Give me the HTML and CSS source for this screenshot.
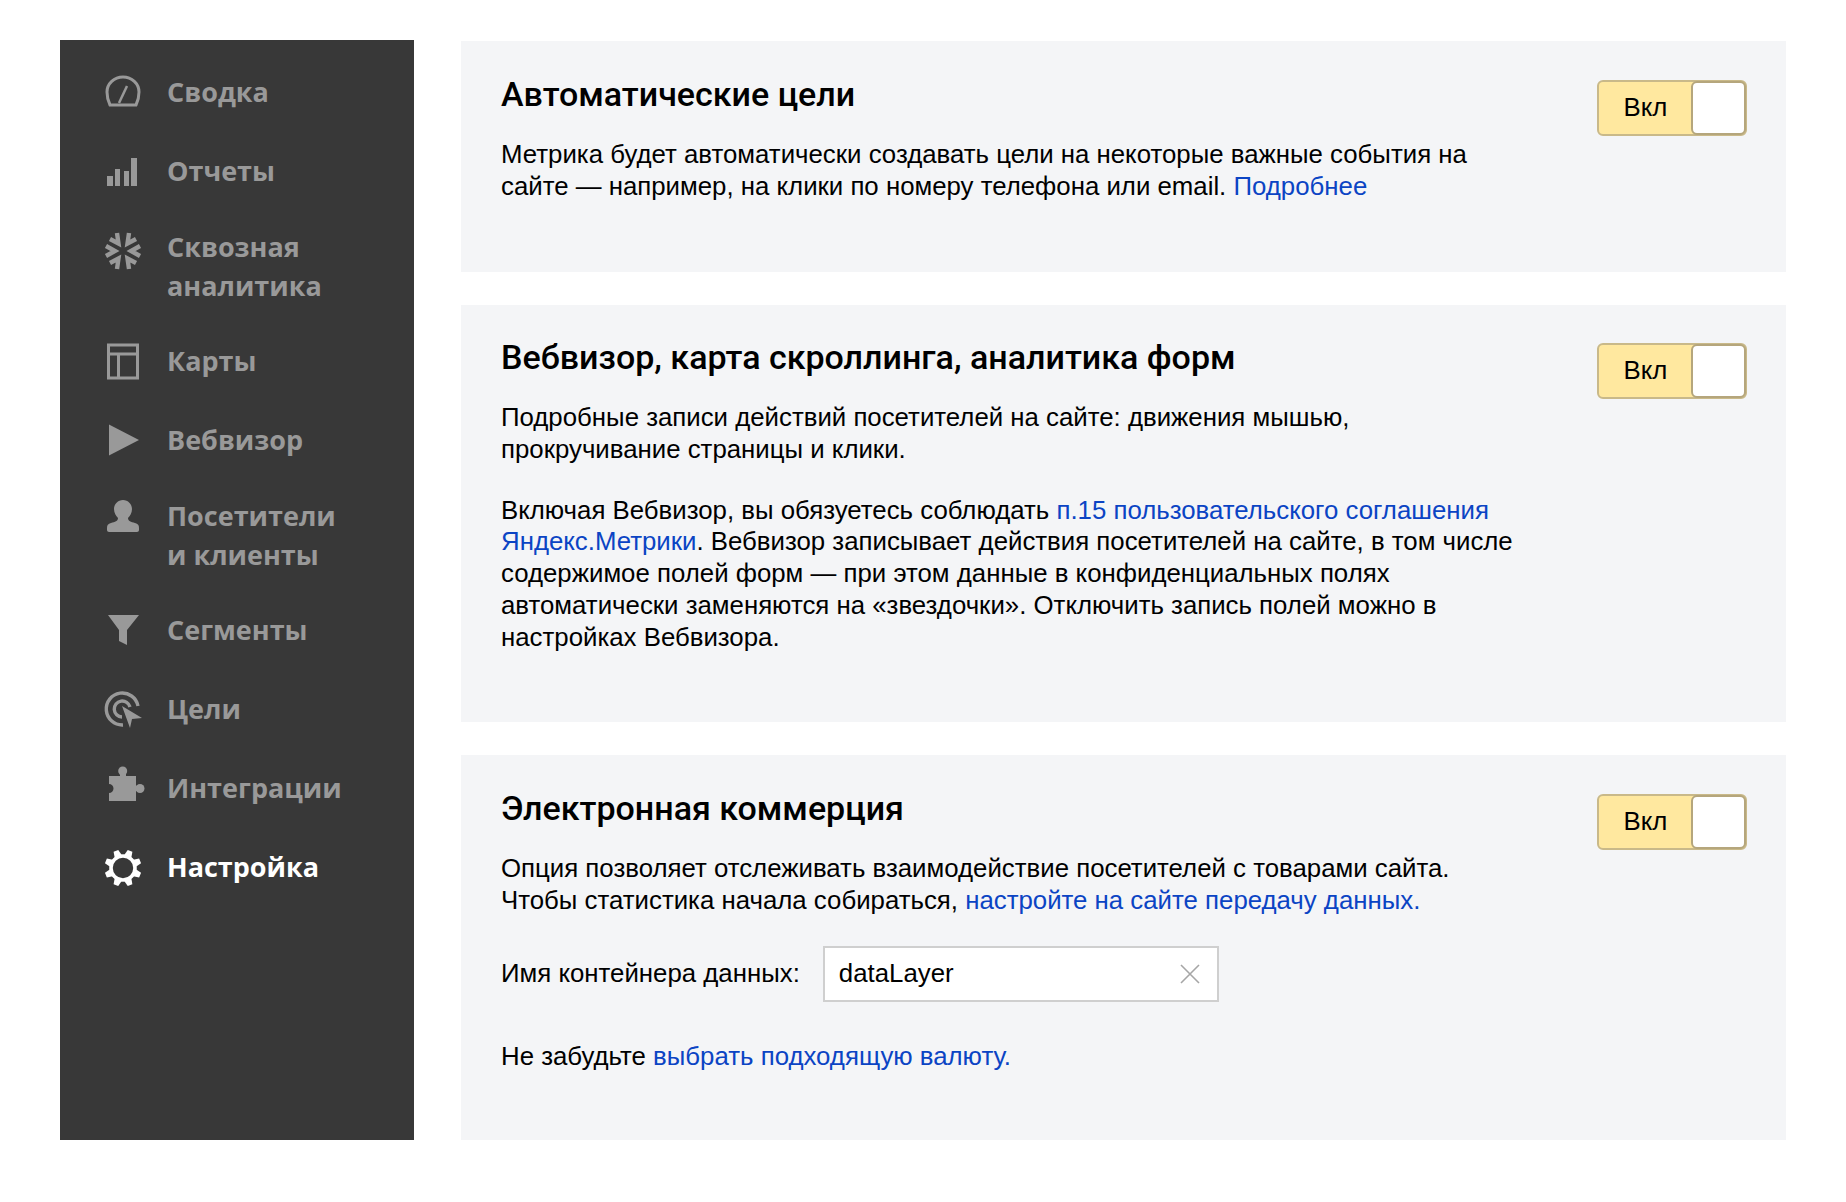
FILE: index.html
```html
<!DOCTYPE html>
<html lang="ru">
<head>
  <meta charset="UTF-8" />
  <title>Настройка</title>
  <link rel="stylesheet" href="styles.css">
</head>
<body>
  <div class="page">
    <nav class="sidebar">
      <a class="nav-item">
        <svg class="nav-icon" viewBox="0 0 36 36"><path d="M2 18a16 15 0 0 1 32 0c0 5-1 9-3 13H5c-2-4-3-8-3-13z" fill="none" stroke="currentColor" stroke-width="3"/><path d="M14 29l8-17" stroke="currentColor" stroke-width="2.5"/></svg>
        <span>Сводка</span>
      </a>
      <a class="nav-item">
        <svg class="nav-icon" viewBox="0 0 36 36"><path d="M2 23h6v10H2zM10 16h5v17h-5zM19 18h5v15h-5zM26 5h6v28h-6z" fill="currentColor"/></svg>
        <span>Отчеты</span>
      </a>
      <a class="nav-item nav-item-wrap">
        <svg class="nav-icon" viewBox="0 0 36 36"><g transform="translate(0 4)" fill="none" stroke="currentColor" stroke-width="4.400"><path d="M12 0l1.500 10.500L5 6"/><path d="M24 0l-1.500 10.500L31 6"/><path d="M35 13l-9 5 9 5"/><path d="M1 13l9 5-9 5"/><path d="M12 36l1.500-10.500L5 30"/><path d="M24 36l-1.500-10.500L31 30"/></g></svg>
        <span>Сквозная<br>аналитика</span>
      </a>
      <a class="nav-item">
        <svg class="nav-icon" viewBox="0 0 36 36"><path d="M3.500 2h29v33h-29zM3.500 11h29M13.500 11v24" fill="none" stroke="currentColor" stroke-width="3"/></svg>
        <span>Карты</span>
      </a>
      <a class="nav-item">
        <svg class="nav-icon" viewBox="0 0 36 36"><path d="M4 2.500L34 18 4 33.500z" fill="currentColor"/></svg>
        <span>Вебвизор</span>
      </a>
      <a class="nav-item nav-item-wrap">
        <svg class="nav-icon" viewBox="0 0 36 36"><path d="M18 2c5 0 9 4 9 9 0 4-2 7-4 9 0 3 3 4 7 5 3 1 4 2 4 5v2c0 1-1 2-2 2H4c-1 0-2-1-2-2v-2c0-3 1-4 4-5 4-1 7-2 7-5-2-2-4-5-4-9 0-5 4-9 9-9z" fill="currentColor"/></svg>
        <span>Посетители<br>и клиенты</span>
      </a>
      <a class="nav-item">
        <svg class="nav-icon" viewBox="0 0 36 36"><path d="M3 3h31L22 18v15l-8-4V18z" fill="currentColor"/></svg>
        <span>Сегменты</span>
      </a>
      <a class="nav-item">
        <svg class="nav-icon" viewBox="0 0 36 36"><path d="M18 34A16 16 0 1 1 33 15M17 26a8 8 0 1 1 8-10" fill="none" stroke="currentColor" stroke-width="3.400"/><path d="M17 15l20 12-10 1-2 9z" fill="currentColor"/></svg>
        <span>Цели</span>
      </a>
      <a class="nav-item">
        <svg class="nav-icon" viewBox="0 0 36 36"><path d="M4 6h27v25H4v-8a4.500 4.500 0 0 0 0-9z" fill="currentColor"/><circle cx="17.700" cy="1" r="4.500" fill="currentColor"/><circle cx="35" cy="18.500" r="4.500" fill="currentColor"/><path d="M15 3h6v4h-6zM30 16h4v5h-4z" fill="currentColor"/></svg>
        <span>Интеграции</span>
      </a>
      <a class="nav-item nav-item-active">
        <svg class="nav-icon" viewBox="0 0 36 36"><circle cx="18" cy="19" r="12" fill="none" stroke="currentColor" stroke-width="3.600"/><g fill="currentColor"><path d="M15.500 0.500h5l1.500 7h-8z" transform="rotate(22.500 18 19)"/><path d="M15.500 0.500h5l1.500 7h-8z" transform="rotate(67.500 18 19)"/><path d="M15.500 0.500h5l1.500 7h-8z" transform="rotate(112.500 18 19)"/><path d="M15.500 0.500h5l1.500 7h-8z" transform="rotate(157.500 18 19)"/><path d="M15.500 0.500h5l1.500 7h-8z" transform="rotate(202.500 18 19)"/><path d="M15.500 0.500h5l1.500 7h-8z" transform="rotate(247.500 18 19)"/><path d="M15.500 0.500h5l1.500 7h-8z" transform="rotate(292.500 18 19)"/><path d="M15.500 0.500h5l1.500 7h-8z" transform="rotate(337.500 18 19)"/></g></svg>
        <span>Настройка</span>
      </a>
    </nav>

    <main class="content">
      <section class="panel panel-goals">
        <div class="panel-text">
          <h2>Автоматические цели</h2>
          <p>Метрика будет автоматически создавать цели на некоторые важные события на<br>сайте — например, на клики по номеру телефона или email. <a href="#">Подробнее</a></p>
        </div>
        <div class="toggle"><span class="toggle-label">Вкл</span><span class="toggle-thumb"></span></div>
      </section>

      <section class="panel panel-webvisor">
        <div class="panel-text">
          <h2>Вебвизор, карта скроллинга, аналитика форм</h2>
          <p>Подробные записи действий посетителей на сайте: движения мышью,<br>прокручивание страницы и клики.</p>
          <p>Включая Вебвизор, вы обязуетесь соблюдать <a href="#">п.15 пользовательского соглашения<br>Яндекс.Метрики</a>. Вебвизор записывает действия посетителей на сайте, в том числе<br>содержимое полей форм — при этом данные в конфиденциальных полях<br>автоматически заменяются на «звездочки». Отключить запись полей можно в<br>настройках Вебвизора.</p>
        </div>
        <div class="toggle"><span class="toggle-label">Вкл</span><span class="toggle-thumb"></span></div>
      </section>

      <section class="panel panel-ecommerce">
        <div class="panel-text">
          <h2>Электронная коммерция</h2>
          <p>Опция позволяет отслеживать взаимодействие посетителей с товарами сайта.<br>Чтобы статистика начала собираться, <a href="#">настройте на сайте передачу данных.</a></p>
          <div class="field">
            <label>Имя контейнера данных:</label>
            <div class="input">
              <span>dataLayer</span>
              <svg class="input-clear" viewBox="0 0 20 20"><path d="M1 1l18 18M19 1L1 19" stroke="#a6a6a6" stroke-width="1.600" fill="none"/></svg>
            </div>
          </div>
          <p>Не забудьте <a href="#">выбрать подходящую валюту.</a></p>
        </div>
        <div class="toggle"><span class="toggle-label">Вкл</span><span class="toggle-thumb"></span></div>
      </section>
    </main>
  </div>
</body>
</html>
```

FILE: styles.css
```css
* {
  box-sizing: border-box;
}
body {
  margin: 0;
  background: #fff;
  color: #000;
  font-family: "Liberation Sans", Arial, sans-serif;
}
.page {
  display: flex;
  gap: 47px;
  padding: 40px 60px 62px;
}

/* sidebar */
.sidebar {
  width: 354px;
  flex-shrink: 0;
  padding: 13px 0 0 45px;
  background: #383838;
}
.nav-item {
  display: flex;
  align-items: flex-start;
  gap: 26px;
  padding: 19px 0 21px;
  color: #999;
  font-family: "Open Sans", sans-serif;
  font-size: 27px;
  font-weight: 700;
  line-height: 39px;
}
.nav-item-wrap {
  padding: 16px 0 17px;
}
.nav-item-active {
  color: #fff;
}
.nav-icon {
  width: 36px;
  height: 36px;
  flex-shrink: 0;
  margin-top: 2px;
  overflow: visible;
}

/* panels */
.content {
  flex: 1;
  display: flex;
  flex-direction: column;
  gap: 33px;
  padding-top: 1px;
}
.panel {
  display: flex;
  justify-content: space-between;
  align-items: flex-start;
  padding: 38px 39px 0 40px;
  background: #f4f5f7;
}
.panel-goals {
  height: 231px;
  padding-top: 39px;
}
.panel-webvisor {
  height: 417px;
}
.panel-ecommerce {
  height: 385px;
  padding-top: 39px;
}
.panel h2 {
  margin: -5px 0 26px;
  font-family: "Roboto", sans-serif;
  font-size: 34px;
  font-weight: 500;
  line-height: 38px;
}
.panel p {
  margin: 0 0 29px;
  font-size: 25.800px;
  line-height: 31.800px;
}
.panel a {
  color: #0b44c4;
  text-decoration: none;
}

/* on/off switch */
.toggle {
  display: flex;
  width: 150px;
  height: 56px;
  flex-shrink: 0;
  background: #ffe89f;
  border: 2px solid #c9b989;
  border-radius: 6px;
}
.toggle-label {
  flex: 1;
  font-size: 25.800px;
  line-height: 50px;
  text-align: center;
}
.toggle-thumb {
  width: 55px;
  margin: -1px;
  background: #fff;
  border: 2px solid #b5a67c;
  border-radius: 6px;
}

/* data container field */
.field {
  display: flex;
  align-items: center;
  gap: 23px;
  margin-bottom: 39px;
  font-size: 25.800px;
}
.input {
  display: flex;
  align-items: center;
  justify-content: space-between;
  width: 396px;
  height: 56px;
  padding: 0 17px 0 14px;
  background: #fff;
  border: 2px solid #cfcfcf;
}
.input-clear {
  width: 20px;
  height: 20px;
}
```
